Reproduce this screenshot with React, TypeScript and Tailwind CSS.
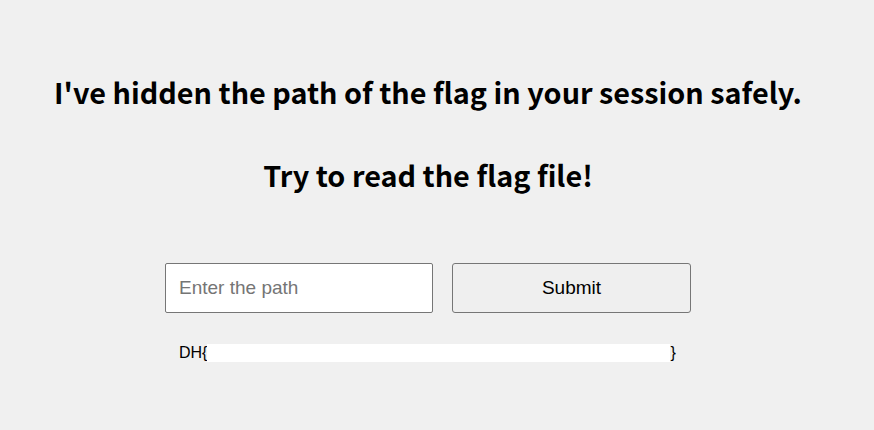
export default function App() {
  return (
    <div className="min-h-[430px] w-full bg-[#f0f0f0]">
      <div className="w-[856px] flex flex-col items-center pt-[72px]">
        <h1 className="text-[28.8px] leading-[40px] font-bold text-black [font-family:'Noto_Sans_CJK_KR','Noto_Sans',sans-serif]">
          I've hidden the path of the flag in your session safely.
        </h1>
        <h1 className="mt-[43px] text-[28.8px] leading-[40px] font-bold text-black [font-family:'Noto_Sans_CJK_KR','Noto_Sans',sans-serif]">
          Try to read the flag file!
        </h1>

        <form className="mt-[68px] flex flex-col [font-family:'Liberation_Sans',Arial,sans-serif]">
          <div className="flex gap-[19px]">
            <input
              type="text"
              placeholder="Enter the path"
              className="w-[268px] h-[50px] rounded-[2px] border border-[#767676] bg-white px-[13px] text-[19px] text-black placeholder:text-[#757575] outline-none"
            />
            <button
              type="button"
              className="w-[239px] h-[50px] rounded-[3px] border border-[#767676] bg-[#efefef] text-[19px] text-black"
            >
              Submit
            </button>
          </div>
          <div className="mt-[31px] pl-[14px] flex items-center text-[16px] leading-[18px] text-black">
            <span>DH&#123;</span>
            <span className="inline-block w-[463px] h-[18px] bg-white"></span>
            <span>&#125;</span>
          </div>
        </form>
      </div>
    </div>
  );
}
